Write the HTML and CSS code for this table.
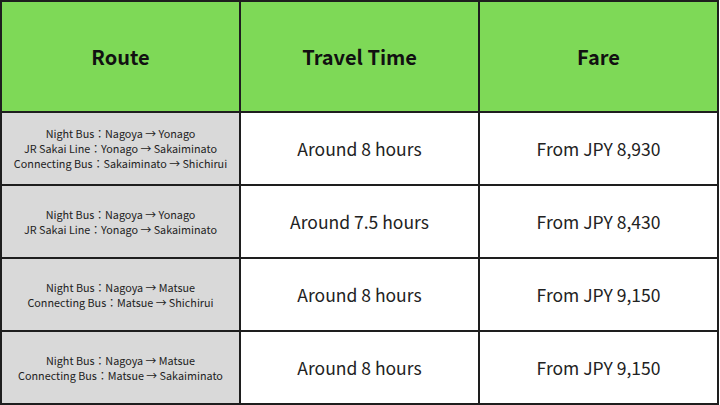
FILE: index.html
```html
<!DOCTYPE html>
<html lang="en">
<head>
<meta charset="utf-8">
<link rel="stylesheet" href="styles.css">
</head>
<body>
<table class="fares">
  <thead>
    <tr>
      <th>Route</th>
      <th>Travel Time</th>
      <th>Fare</th>
    </tr>
  </thead>
  <tbody>
    <tr>
      <td class="route">Night Bus：Nagoya → Yonago<br>JR Sakai Line：Yonago → Sakaiminato<br>Connecting Bus：Sakaiminato → Shichirui</td>
      <td>Around 8 hours</td>
      <td>From JPY 8,930</td>
    </tr>
    <tr>
      <td class="route">Night Bus：Nagoya → Yonago<br>JR Sakai Line：Yonago → Sakaiminato</td>
      <td>Around 7.5 hours</td>
      <td>From JPY 8,430</td>
    </tr>
    <tr>
      <td class="route">Night Bus：Nagoya → Matsue<br>Connecting Bus：Matsue → Shichirui</td>
      <td>Around 8 hours</td>
      <td>From JPY 9,150</td>
    </tr>
    <tr>
      <td class="route">Night Bus：Nagoya → Matsue<br>Connecting Bus：Matsue → Sakaiminato</td>
      <td>Around 8 hours</td>
      <td>From JPY 9,150</td>
    </tr>
  </tbody>
</table>
</body>
</html>
```
FILE: styles.css
```css
html, body {
  margin: 0;
  padding: 0;
  background: #ffffff;
}
body {
  font-family: "Noto Sans CJK JP", "Noto Sans", sans-serif;
  color: #222222;
}
.fares {
  border-collapse: collapse;
  width: 719px;
  table-layout: fixed;
}
.fares th,
.fares td {
  border: 2px solid #1e1e1e;
  text-align: center;
  vertical-align: middle;
  padding: 0;
}
.fares th {
  background: #7ed957;
  height: 109px;
  font-size: 20px;
  font-weight: bold;
  color: #111;
}
.fares td {
  height: 71px;
  font-size: 17.5px;
}
.fares td.route {
  background: #d9d9d9;
  font-size: 10.8px;
  line-height: 15px;
}
```
